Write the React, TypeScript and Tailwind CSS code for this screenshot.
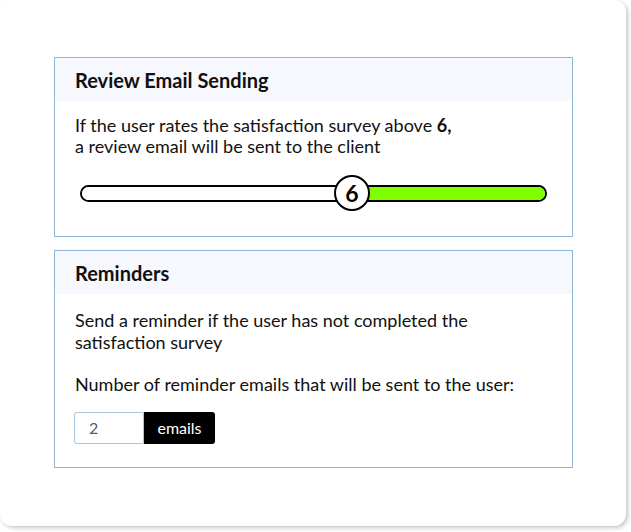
import React from "react";

export default function App() {
  const font = { fontFamily: "Lato, 'Open Sans', sans-serif" };
  return (
    <div className="w-[631px] h-[532px] bg-white" style={font}>
      <div className="w-[626px] h-[526px] bg-white rounded-[12px] shadow-[2px_2px_4px_rgba(0,0,0,0.22)] pl-[54px] pt-[57px]">
        <div className="w-[519px] flex flex-col gap-[13px]">
          {/* Card 1 */}
          <div className="border border-[#8fb6d8] bg-white">
            <div className="h-[43px] bg-[#f7f8fd] px-[20px] flex items-center pt-[1px]">
              <span className="text-[20px] font-bold text-[#111]">Review Email Sending</span>
            </div>
            <div className="px-[20px] pt-[14px] pb-[25px]">
              <p className="text-[18px] leading-[21px] text-[#111]">
                If the user rates the satisfaction survey above <b className="font-bold">6,</b>
                <br />a review email will be sent to the client
              </p>
              <div className="mt-[18px] mx-[5px] relative h-[36px] flex items-center">
                <div className="w-full h-[17px] rounded-full border-2 border-black bg-white overflow-hidden flex">
                  <div className="w-[272px] h-full bg-white" />
                  <div className="flex-1 h-full bg-[#80ff00]" />
                </div>
                <div className="absolute left-[254px] top-0 w-[36px] h-[36px] rounded-full border-2 border-black bg-white flex items-center justify-center">
                  <span className="text-[23px] font-bold leading-none text-black">6</span>
                </div>
              </div>
            </div>
          </div>
          {/* Card 2 */}
          <div className="border border-[#8fb6d8] bg-white">
            <div className="h-[43px] bg-[#f7f8fd] px-[20px] flex items-center pt-[1px]">
              <span className="text-[20px] font-bold text-[#111]">Reminders</span>
            </div>
            <div className="px-[20px] pt-[15px] pb-[23px]">
              <p className="text-[18px] leading-[22px] text-[#111]">
                Send a reminder if the user has not completed the
                <br />satisfaction survey
              </p>
              <p className="mt-[20px] text-[18px] leading-[22px] text-[#111]">
                Number of reminder emails that will be sent to the user:
              </p>
              <div className="mt-[17px] -ml-[1px] flex h-[32px]">
                <div className="w-[70px] h-full border border-[#a9c6de] rounded-l-[3px] flex items-center pl-[14px] text-[16px] text-[#5a5670]">
                  2
                </div>
                <div className="w-[71px] h-full bg-black rounded-r-[3px] flex items-center justify-center text-[16px] text-white">
                  emails
                </div>
              </div>
            </div>
          </div>
        </div>
      </div>
    </div>
  );
}
